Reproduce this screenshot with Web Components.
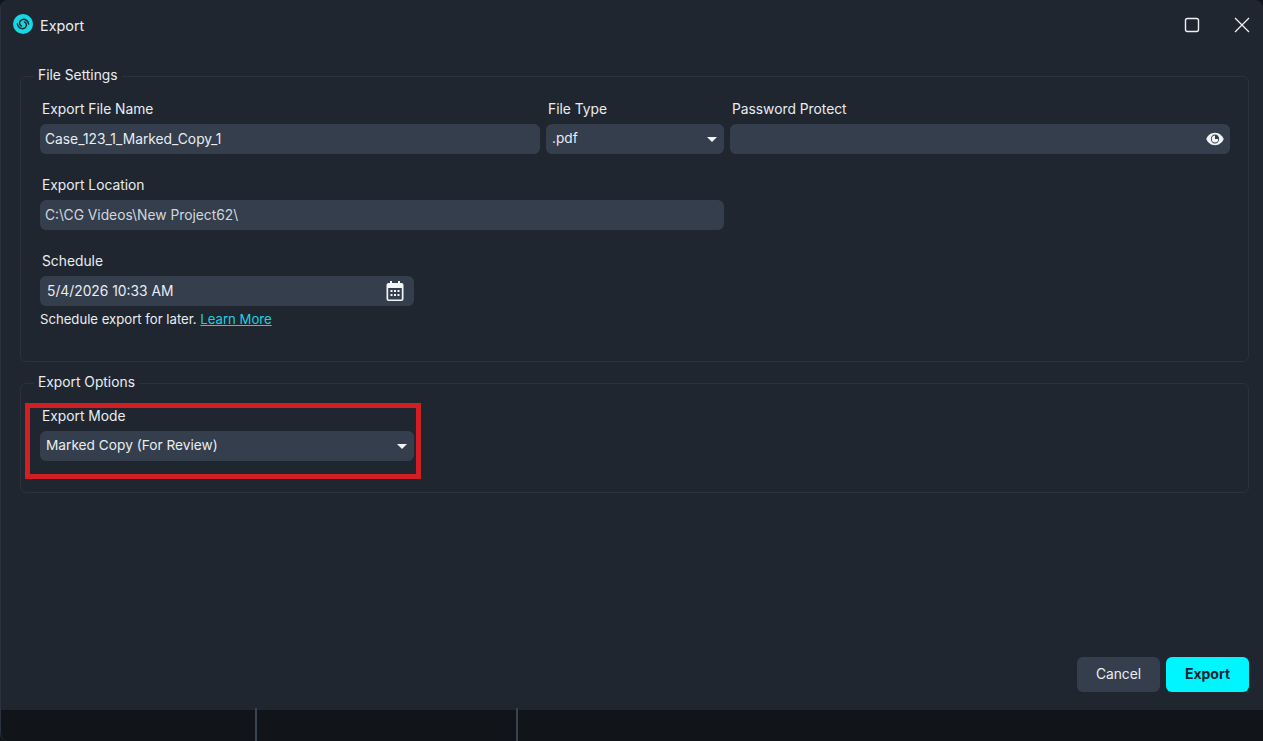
<!DOCTYPE html>
<html>
<head>
<meta charset="utf-8">
<title>Export</title>
<style>
  html, body { margin: 0; height: 100%; background: #111418; overflow: hidden; }
  body { font-family: Inter, "Liberation Sans", sans-serif; font-size: 13.8px; color: #e9edf1; }
</style>
</head>
<body>
<export-app></export-app>

<script>
class TitleBar extends HTMLElement {
  constructor() {
    super();
    this.attachShadow({ mode: 'open' }).innerHTML = `
      <style>
        :host { display: flex; align-items: center; height: 52px; padding: 0 11px 0 12px; flex: none; }
        .logo { width: 20px; height: 20px; margin: -4px 7px 0 0; flex: none; }
        .name { font-size: 14.4px; flex: 1; margin-top: -1px; }
        .btn { width: 20px; height: 20px; display: block; margin: 0 0 2px 30px; }
      </style>
      <svg class="logo" viewBox="0 0 20 20">
        <circle cx="10" cy="10" r="10" fill="#14d8e4"/>
        <g fill="none" stroke="#1f2630" stroke-width="1.500" stroke-linecap="round">
          <path id="arm" d="M15.600 10C15.200 6.800 12.400 5 9.800 5.400 7.400 5.800 6.100 8.200 6.700 10 7 11.200 7.800 11.800 8.600 11.900"/>
          <path transform="rotate(180 10 10)" d="M15.600 10C15.200 6.800 12.400 5 9.800 5.400 7.400 5.800 6.100 8.200 6.700 10 7 11.200 7.800 11.800 8.600 11.900"/>
        </g>
      </svg>
      <span class="name"><slot></slot></span>
      <svg class="btn" viewBox="0 0 20 20"><rect x="3.500" y="3.500" width="13" height="13" rx="2" fill="none" stroke="#eef1f4" stroke-width="1.400"/></svg>
      <svg class="btn" viewBox="0 0 20 20"><path d="M3 3l14 14M17 3L3 17" fill="none" stroke="#eef1f4" stroke-width="1.300"/></svg>
    `;
  }
}

class OptionGroup extends HTMLElement {
  constructor() {
    super();
    this.attachShadow({ mode: 'open' }).innerHTML = `
      <style>
        :host { display: block; }
        fieldset { margin: 0; padding: 0 18px 0 19px; border: 1px solid #2a323d; border-radius: 6px; min-height: var(--group-height, 0); box-sizing: border-box; }
        legend { margin-left: -6px; padding: 0 4px 2px; font-size: 13.8px; line-height: 17px; }
        .body { display: grid; grid-template-columns: 500px 178px 500px; column-gap: 6px; row-gap: 22px; margin-top: 14px; }
      </style>
      <fieldset>
        <legend></legend>
        <div class="body"><slot></slot></div>
      </fieldset>
    `;
    this.shadowRoot.querySelector('legend').textContent = this.getAttribute('legend');
  }
}

class FormField extends HTMLElement {
  constructor() {
    super();
    this.attachShadow({ mode: 'open' }).innerHTML = `
      <style>
        :host { display: block; min-width: 0; }
        label { display: block; padding-left: 2px; margin-bottom: 5px; font-size: 13.8px; line-height: 19px; }
      </style>
      <label></label>
      <slot></slot>
    `;
    this.shadowRoot.querySelector('label').textContent = this.getAttribute('label');
  }
}

class TextBox extends HTMLElement {
  constructor() {
    super();
    this.attachShadow({ mode: 'open' }).innerHTML = `
      <style>
        :host { display: flex; align-items: center; height: 30px; background: #343e4c; border-radius: 6px; padding: 0 10px 0 5px; font-size: 13.800px; color: #e9edf1; box-sizing: border-box; }
        :host([muted]) { color: #d2d7dd; }
        .val { flex: 1; white-space: nowrap; }
      </style>
      <span class="val"><slot></slot></span>
      <slot name="icon"></slot>
    `;
  }
}

class DropDown extends HTMLElement {
  constructor() {
    super();
    this.attachShadow({ mode: 'open' }).innerHTML = `
      <style>
        :host { display: flex; align-items: center; height: 30px; background: #343e4c; border-radius: 6px; padding: 0 7px 0 6px; font-size: 13.700px; color: #e9edf1; box-sizing: border-box; }
        .val { flex: 1; white-space: nowrap; padding-bottom: 2px; }
        .arrow { width: 0; height: 0; border-left: 5.500px solid transparent; border-right: 5.500px solid transparent; border-top: 5.500px solid #f2f4f6; }
      </style>
      <span class="val"><slot></slot></span>
      <span class="arrow"></span>
    `;
  }
}

class ActionButton extends HTMLElement {
  constructor() {
    super();
    this.attachShadow({ mode: 'open' }).innerHTML = `
      <style>
        :host { display: flex; align-items: center; justify-content: center; width: 83px; height: 35px; padding-bottom: 2px; box-sizing: border-box; background: #343e4c; border-radius: 6px; color: #e9edf1; font-size: 13.800px; }
        :host([primary]) { background: #00f6ff; color: #0f2530; font-weight: 700; font-size: 14px; }
      </style>
      <slot></slot>
    `;
  }
}

class TaskStrip extends HTMLElement {
  constructor() {
    super();
    this.attachShadow({ mode: 'open' }).innerHTML = `
      <style>
        :host { display: grid; grid-template-columns: 256px 261px 1fr; height: 31px; background: #111418; flex: none; border-left: 1px solid #2a323d; border-bottom-left-radius: 8px; box-sizing: border-box; }
        div { border-right: 2px solid #39424f; margin-top: -2px; }
        div:last-child { border: 0; }
      </style>
      <div></div><div></div><div></div>
    `;
  }
}

class ExportApp extends HTMLElement {
  constructor() {
    super();
    this.attachShadow({ mode: 'open' }).innerHTML = `
      <style>
        :host { display: flex; flex-direction: column; height: 741px; }
        .win { flex: 1; display: flex; flex-direction: column; background: #1f2630; border-left: 1px solid #2a323d; border-radius: 8px 8px 0 0; min-height: 0; }
        main { flex: 1; display: flex; flex-direction: column; gap: 12px; padding: 15px 14px 0 19px; min-height: 0; }
        .settings { --group-height: 295px; }
        .options { --group-height: 119px; }
        .wide { grid-column: 1 / 3; }
        .sched { grid-column: 1 / 4; }
        .sched text-box, .mode drop-down { width: 374px; }
        .mode { grid-column: 1 / 4; position: relative; }
        .mark { position: absolute; left: -15px; top: -4px; width: 396px; height: 76px; box-sizing: border-box; border: 5px solid #d11f24; }
        .help { font-size: 13.150px; margin-top: 5px; line-height: 16px; }
        .help a { color: #1fd0de; text-decoration: underline; }
        svg { display: block; flex: none; }
        footer { display: flex; justify-content: flex-end; gap: 6px; padding: 0 14px 18px 0; }
      </style>
      <div class="win">
        <title-bar>Export</title-bar>
        <main>
          <option-group class="settings" legend="File Settings">
            <form-field label="Export File Name"><text-box>Case_123_1_Marked_Copy_1</text-box></form-field>
            <form-field label="File Type"><drop-down>.pdf</drop-down></form-field>
            <form-field label="Password Protect">
              <text-box>
                <svg slot="icon" width="18" height="14" viewBox="0 0 20 14" preserveAspectRatio="none" style="margin-right:-4px">
                  <path fill-rule="evenodd" fill="#f2f4f6" d="M10 .8C5.400 .8 1.800 3.600 .3 7c1.500 3.400 5.100 6.200 9.700 6.200s8.200-2.800 9.700-6.200C18.200 3.600 14.600 .8 10 .8zM10 2.400A4.600 4.600 0 1 1 10 11.600 4.600 4.600 0 0 1 10 2.400z"/>
                  <path fill="#f2f4f6" d="M10 3.400a3.600 3.600 0 1 0 3.600 3.600h-3.600V3.400z"/>
                </svg>
              </text-box>
            </form-field>
            <form-field class="wide" label="Export Location"><text-box muted>C:\\CG Videos\\New Project62\\</text-box></form-field>
            <form-field class="sched" label="Schedule">
              <text-box style="padding-left:7px">5/4/2026 10:33 AM
                <svg slot="icon" width="18" height="20" viewBox="0 0 18 20">
                  <path fill="#f2f4f6" fill-rule="evenodd" d="M4 0h2v2h6V0h2v2h1.500A2 2 0 0 1 17.500 4v14a2 2 0 0 1-2 2h-13a2 2 0 0 1-2-2V4a2 2 0 0 1 2-2H4V0zM2.200 7v11c0 .3.200.5.500.5h12.600c.3 0 .5-.2.500-.5V7H2.200z"/>
                  <path fill="#f2f4f6" d="M4.500 9h2v2h-2zM8 9h2v2H8zM11.500 9h2v2h-2zM4.500 13h2v2h-2zM8 13h2v2H8zM11.500 13h2v2h-2z"/>
                </svg>
              </text-box>
              <div class="help">Schedule export for later. <a>Learn More</a></div>
            </form-field>
          </option-group>
          <option-group class="options" legend="Export Options">
            <form-field class="mode" label="Export Mode">
              <drop-down>Marked Copy (For Review)</drop-down>
              <div class="mark"></div>
            </form-field>
          </option-group>
        </main>
        <footer>
          <action-button>Cancel</action-button>
          <action-button primary>Export</action-button>
        </footer>
      </div>
      <task-strip></task-strip>
    `;
  }
}

customElements.define('title-bar', TitleBar);
customElements.define('option-group', OptionGroup);
customElements.define('form-field', FormField);
customElements.define('text-box', TextBox);
customElements.define('drop-down', DropDown);
customElements.define('action-button', ActionButton);
customElements.define('task-strip', TaskStrip);
customElements.define('export-app', ExportApp);
</script>
</body>
</html>
